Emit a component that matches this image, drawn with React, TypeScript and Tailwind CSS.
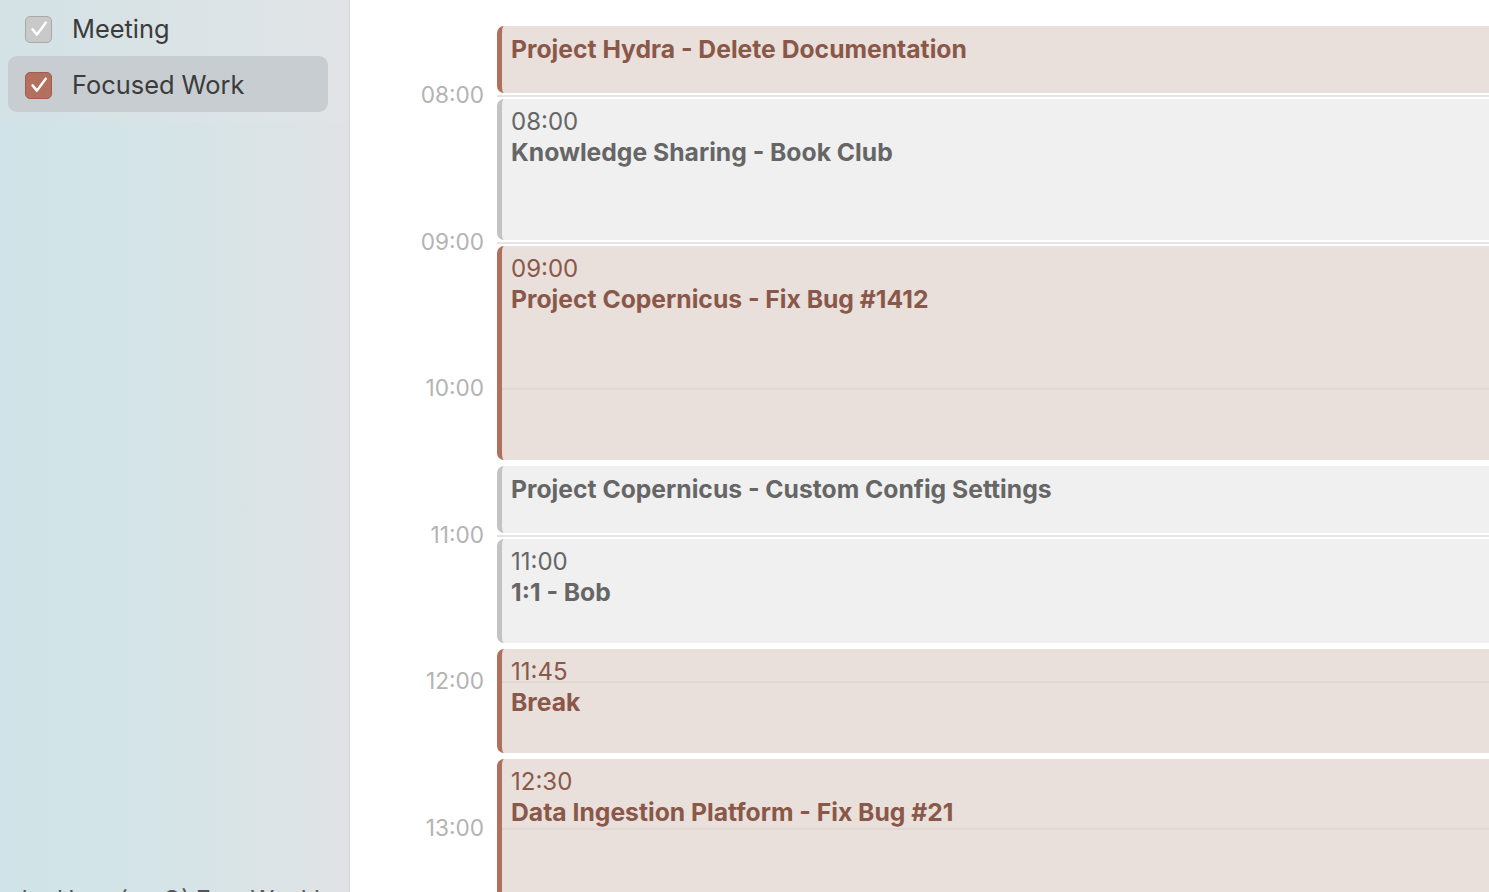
import React from 'react';

type CalEvent = {
  id: number;
  start?: string;
  title: string;
  hours: number;
  kind: 'focus' | 'meeting';
};

const HOUR = 146.5;

const events: CalEvent[] = [
  { id: 1, title: 'Project Hydra - Delete Documentation', hours: 0.5, kind: 'focus' },
  { id: 2, start: '08:00', title: 'Knowledge Sharing - Book Club', hours: 1, kind: 'meeting' },
  { id: 3, start: '09:00', title: 'Project Copernicus - Fix Bug #1412', hours: 1.5, kind: 'focus' },
  { id: 4, title: 'Project Copernicus - Custom Config Settings', hours: 0.5, kind: 'meeting' },
  { id: 5, start: '11:00', title: '1:1 - Bob', hours: 0.75, kind: 'meeting' },
  { id: 6, start: '11:45', title: 'Break', hours: 0.75, kind: 'focus' },
  { id: 7, start: '12:30', title: 'Data Ingestion Platform - Fix Bug #21', hours: 1.5, kind: 'focus' },
];

const hourLabels = ['08:00', '09:00', '10:00', '11:00', '12:00', '13:00'];

const Check = () => (
  <svg viewBox="0 0 16 16" className="h-[22px] w-[22px]" fill="none">
    <path d="M3.3 8.3 6.5 12.1 12.9 3.4" stroke="white" strokeWidth="1.8" strokeLinecap="round" strokeLinejoin="round" />
  </svg>
);

const CalendarRow = ({ label, color, active }: { label: string; color: 'gray' | 'rust'; active?: boolean }) => (
  <div className={`flex h-[56px] items-center gap-[20px] rounded-[9px] pl-[17px] ${active ? 'bg-[#c7cdd0]' : ''}`}>
    <div
      className={`mt-[2px] flex h-[27px] w-[27px] items-center justify-center rounded-[5px] border ${
        color === 'rust' ? 'border-[#9f5e4d] bg-[#b3705e]' : 'border-[#a9a9a9] bg-[#c9c9c9]'
      }`}
    >
      <Check />
    </div>
    <span className="pt-[3px] text-[25.4px] text-[#3b3b3b]">{label}</span>
  </div>
);

const App: React.FC = () => {
  return (
    <div className="flex h-[892px] w-full overflow-hidden bg-white font-['Inter','Liberation_Sans',sans-serif]">
      {/* sidebar */}
      <aside className="flex h-[892px] w-[350px] shrink-0 flex-col overflow-hidden border-r border-[#d4d6d8] bg-gradient-to-r from-[#cfe4e8] via-[#d5e4e7] to-[#e0e3e6]">
        <div className="bg-gradient-to-r from-[#d3e2e5] to-[#e1e4e7] pb-[10px] pl-[8px] pr-[21px]">
          <CalendarRow label="Meeting" color="gray" />
          <CalendarRow label="Focused Work" color="rust" active />
        </div>
        <div className="flex-1" />
        <div className="-mb-[23px] whitespace-nowrap pl-[14px] text-[24px] leading-[30px] text-[#555]">
          the Hour (on Q) 7am Weekly
        </div>
      </aside>

      {/* day view */}
      <main className="flex min-w-0 flex-1 overflow-hidden">
        <div className="flex w-[134px] shrink-0 flex-col pt-[22px]">
          {hourLabels.map(h => (
            <div key={h} className="flex h-[146.5px] shrink-0 items-center justify-end text-[22.6px] text-[#b3b3b3]">
              {h}
            </div>
          ))}
        </div>

        <div className="relative ml-[13px] flex min-w-0 flex-1 flex-col gap-[6px] pt-[26px]">
          {hourLabels.map((h, i) => (
            <div
              key={h}
              className="absolute left-0 right-0 h-[2px] bg-[#e4e4e4]"
              style={{ top: 23 + HOUR / 2 + i * HOUR - 1 }}
            />
          ))}
          {events.map(ev => (
            <div
              key={ev.id}
              className={`relative shrink-0 rounded-l-[7px] border-l-[5px] pl-[9px] pt-[8px] text-[24px] leading-[30px] ${
                ev.kind === 'focus'
                  ? 'border-[#b0705e] bg-[#e0d1cc]/70 text-[#8a5849]'
                  : 'border-[#c3c3c3] bg-[#eaeaea]/70 text-[#666666]'
              }`}
              style={{ height: ev.hours * HOUR - 6 }}
            >
              {ev.start && <div>{ev.start}</div>}
              <div className="text-[24.7px] font-bold">{ev.title}</div>
            </div>
          ))}
        </div>
      </main>
    </div>
  );
};

export default App;
